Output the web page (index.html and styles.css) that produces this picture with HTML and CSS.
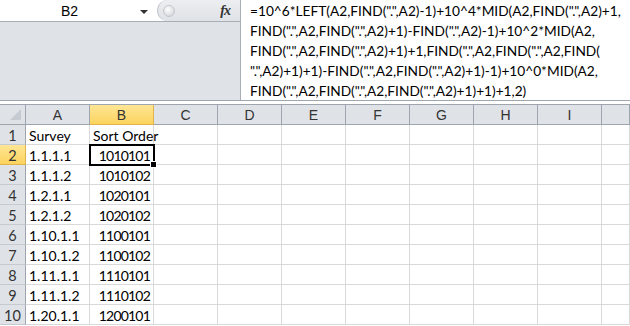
FILE: index.html
```html
<html>
<head>
    <title>Sort Order</title>
    <link rel="stylesheet" href="styles.css">
</head>
<body>
    <div class="formula-bar">
        <div class="name-side">
            <div class="name-row">
                <div class="name-box">B2<span class="drop"></span></div>
                <div class="pill">
                    <span class="knob"></span>
                    <span class="fx">fx</span>
                </div>
            </div>
        </div>
        <div class="formula-text">
            =10^6*LEFT(A2,FIND(".",A2)-1)+10^4*MID(A2,FIND(".",A2)+1,<br>
            FIND(".",A2,FIND(".",A2)+1)-FIND(".",A2)-1)+10^2*MID(A2,<br>
            FIND(".",A2,FIND(".",A2)+1)+1,FIND(".",A2,FIND(".",A2,FIND(<br>
            ".",A2)+1)+1)-FIND(".",A2,FIND(".",A2)+1)-1)+10^0*MID(A2,<br>
            FIND(".",A2,FIND(".",A2,FIND(".",A2)+1)+1)+1,2)
        </div>
    </div>
    <div class="split"></div>

    <div class="sheet" id="sheet"></div>

    <script>
        const sheet = document.getElementById("sheet");
        const cols = ["A", "B", "C", "D", "E", "F", "G", "H", "I", ""];
        const data = [
            ["Survey", "Sort Order"],
            ["1.1.1.1", "1010101"],
            ["1.1.1.2", "1010102"],
            ["1.2.1.1", "1020101"],
            ["1.2.1.2", "1020102"],
            ["1.10.1.1", "1100101"],
            ["1.10.1.2", "1100102"],
            ["1.11.1.1", "1110101"],
            ["1.11.1.2", "1110102"],
            ["1.20.1.1", "1200101"]
        ];

        // Header row
        let html = `<div class="corner"><span></span></div>`;
        cols.forEach(c => {
            html += `<div class="col-head${c === "B" ? " sel" : ""}">${c}</div>`;
        });

        // Data rows
        data.forEach((row, i) => {
            const n = i + 1;
            html += `<div class="row-head${n === 2 ? " sel" : ""}">${n}</div>`;
            cols.forEach((c, j) => {
                let val = row[j] || "";
                let cls = "cell";
                if (j === 1 && n > 1) cls += " num";
                if (j === 1 && n === 2) cls += " active";
                html += `<div class="${cls}">${val}</div>`;
            });
        });
        sheet.innerHTML = html;
    </script>
</body>
</html>
```

FILE: styles.css
```css
body {
    margin: 0;
    padding: 0;
    background: #ffffff;
    font-family: 'Lato', 'Liberation Sans', sans-serif;
    font-size: 14px;
    color: #000;
    overflow: hidden;
}

.formula-bar {
    display: flex;
    height: 101px;
    border-bottom: 1px solid #9ea5ae;
    box-sizing: border-box;
}

.name-side {
    width: 240px;
    background: #dfe2e7;
    border-right: 1px solid #a8aeb6;
    flex-shrink: 0;
}

.name-row {
    display: flex;
    height: 22px;
    border-bottom: 1px solid #a8aeb6;
    box-sizing: border-box;
    background: #ffffff;
}

.name-box {
    width: 157px;
    position: relative;
    padding-left: 61px;
    box-sizing: border-box;
    line-height: 22px;
    font-family: 'Liberation Sans', sans-serif;
    font-size: 14px;
}

.drop {
    position: absolute;
    right: 9px;
    top: 10px;
    border-left: 4px solid transparent;
    border-right: 4px solid transparent;
    border-top: 4px solid #333;
}

.pill {
    flex: 1;
    display: flex;
    align-items: center;
    justify-content: space-between;
    background: linear-gradient(#eceef1, #dfe2e6);
    border-left: 1px solid #b8bdc4;
    border-radius: 11px 0 0 11px;
    padding: 0 10px 0 5px;
}

.knob {
    width: 10px;
    height: 10px;
    border-radius: 50%;
    background: radial-gradient(circle at 40% 35%, #ffffff, #c9cdd3);
    border: 1px solid #c4c8ce;
}

.fx {
    font-family: 'Liberation Serif', serif;
    font-style: italic;
    font-weight: bold;
    font-size: 14px;
    color: #333;
    letter-spacing: -1px;
}

.formula-text {
    flex: 1;
    padding: 1px 0 0 9px;
    line-height: 20px;
    font-size: 13.7px;
    color: #000;
    white-space: nowrap;
}

.split {
    height: 4px;
    border-bottom: 1px solid #9ea5ae;
    box-sizing: border-box;
}

.sheet {
    display: grid;
    grid-template-columns: 26px repeat(9, 64px) 1fr;
    grid-auto-rows: 20px;
}

.corner,
.col-head,
.row-head {
    background: #dfe3e8;
    color: #333;
    box-sizing: border-box;
    text-align: center;
    line-height: 20px;
}

.corner {
    border-right: 1px solid #9ea5ae;
    border-bottom: 1px solid #9ea5ae;
    position: relative;
}

.corner span {
    position: absolute;
    right: 4px;
    bottom: 4px;
    border-left: 11px solid transparent;
    border-bottom: 11px solid #c6cbd1;
}

.col-head {
    border-right: 1px solid #9ea5ae;
    border-bottom: 1px solid #9ea5ae;
    font-family: 'Liberation Sans', sans-serif;
    font-size: 14px;
}

.row-head {
    border-right: 1px solid #9ea5ae;
    border-bottom: 1px solid #c5cad1;
    line-height: 21px;
    font-size: 14.5px;
}

.sel {
    background: linear-gradient(#ffe695, #fbd35e);
    border-right-color: #e2b24b;
    border-bottom-color: #e2b24b;
}

.cell {
    border-right: 1px solid #d9d9d9;
    border-bottom: 1px solid #d9d9d9;
    box-sizing: border-box;
    padding: 0 3px;
    line-height: 21px;
    font-size: 14px;
    white-space: nowrap;
    overflow: visible;
}

.num {
    text-align: right;
    letter-spacing: -0.8px;
}

.active {
    position: relative;
    outline: 2px solid #000;
    outline-offset: -1px;
    z-index: 1;
}

.active::after {
    content: "";
    position: absolute;
    right: -4px;
    bottom: -4px;
    width: 5px;
    height: 5px;
    background: #000;
    border: 1px solid #fff;
}
```
